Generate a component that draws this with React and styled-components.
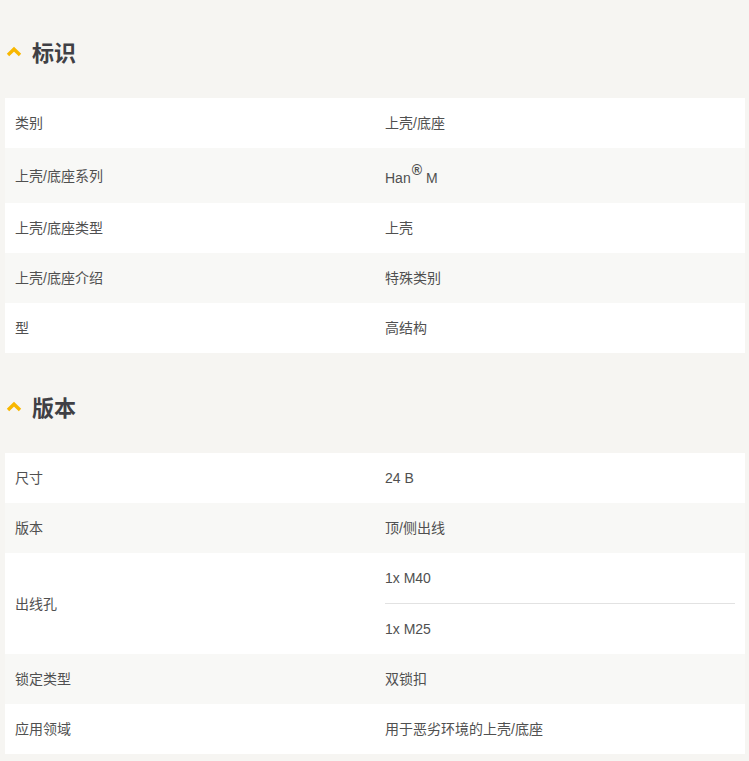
import React from 'react';
import styled, { createGlobalStyle } from 'styled-components';

const GlobalStyle = createGlobalStyle`
  html, body {
    margin: 0;
    padding: 0;
    background: #f6f5f2;
  }
  body {
    font-family: "Liberation Sans", "Noto Sans CJK SC", sans-serif;
    color: #505050;
  }
`

const Page = styled.div`
  padding: 0 4px 8px 5px;
`

const Section = styled.section`
  padding-top: 36px;
`

const Heading = styled.h2`
  display: flex;
  align-items: center;
  gap: 10px;
  height: 30px;
  margin: 0 0 32px;
  padding-left: 1px;
  font-size: 22px;
  font-weight: bold;
  color: #404045;
  font-family: "Noto Sans CJK SC", sans-serif;
`

const Table = styled.div`
  margin-bottom: 2px;
`

const Row = styled.div`
  display: flex;
  background: ${p => (p.$striped ? '#f8f8f6' : '#ffffff')};
`

const Cell = styled.div`
  flex: 1 1 50%;
  display: flex;
  align-items: center;
  padding: 15px 10px;
  font-size: 14px;
  line-height: 20px;
`

const ListCell = styled.div`
  flex: 1 1 50%;
  padding: 0 10px;
  font-size: 14px;
  line-height: 20px;
`

const ListItem = styled.div`
  padding: 15px 0;

  & + & {
    border-top: 1px solid #e2e2e2;
  }
`

const Sup = styled.sup`
  font-size: 14px;
  line-height: 1;
  vertical-align: 8px;
  margin-left: 1px;
  font-weight: bold;
`

function Chevron() {
  return (
    <svg width="16" height="11" viewBox="0 0 16 11">
      <polyline points="2,9 8,3.2 14,9" fill="none" stroke="#f8b700" strokeWidth="3.4" />
    </svg>
  )
}

const sections = [
  {
    title: '标识',
    rows: [
      ['类别', '上壳/底座'],
      ['上壳/底座系列', <span>Han<Sup>®</Sup> M</span>],
      ['上壳/底座类型', '上壳'],
      ['上壳/底座介绍', '特殊类别'],
      ['型', '高结构'],
    ],
  },
  {
    title: '版本',
    rows: [
      ['尺寸', '24 B'],
      ['版本', '顶/侧出线'],
      ['出线孔', ['1x M40', '1x M25']],
      ['锁定类型', '双锁扣'],
      ['应用领域', '用于恶劣环境的上壳/底座'],
    ],
  },
]

export default function App() {
  return (
    <Page>
      <GlobalStyle />
      {sections.map(section => (
        <Section key={section.title}>
          <Heading>
            <Chevron />
            {section.title}
          </Heading>
          <Table>
            {section.rows.map(([label, value], i) => (
              <Row key={label} $striped={i % 2 === 1}>
                <Cell>{label}</Cell>
                {Array.isArray(value) ? (
                  <ListCell>
                    {value.map(v => <ListItem key={v}>{v}</ListItem>)}
                  </ListCell>
                ) : (
                  <Cell>{value}</Cell>
                )}
              </Row>
            ))}
          </Table>
        </Section>
      ))}
    </Page>
  )
}
